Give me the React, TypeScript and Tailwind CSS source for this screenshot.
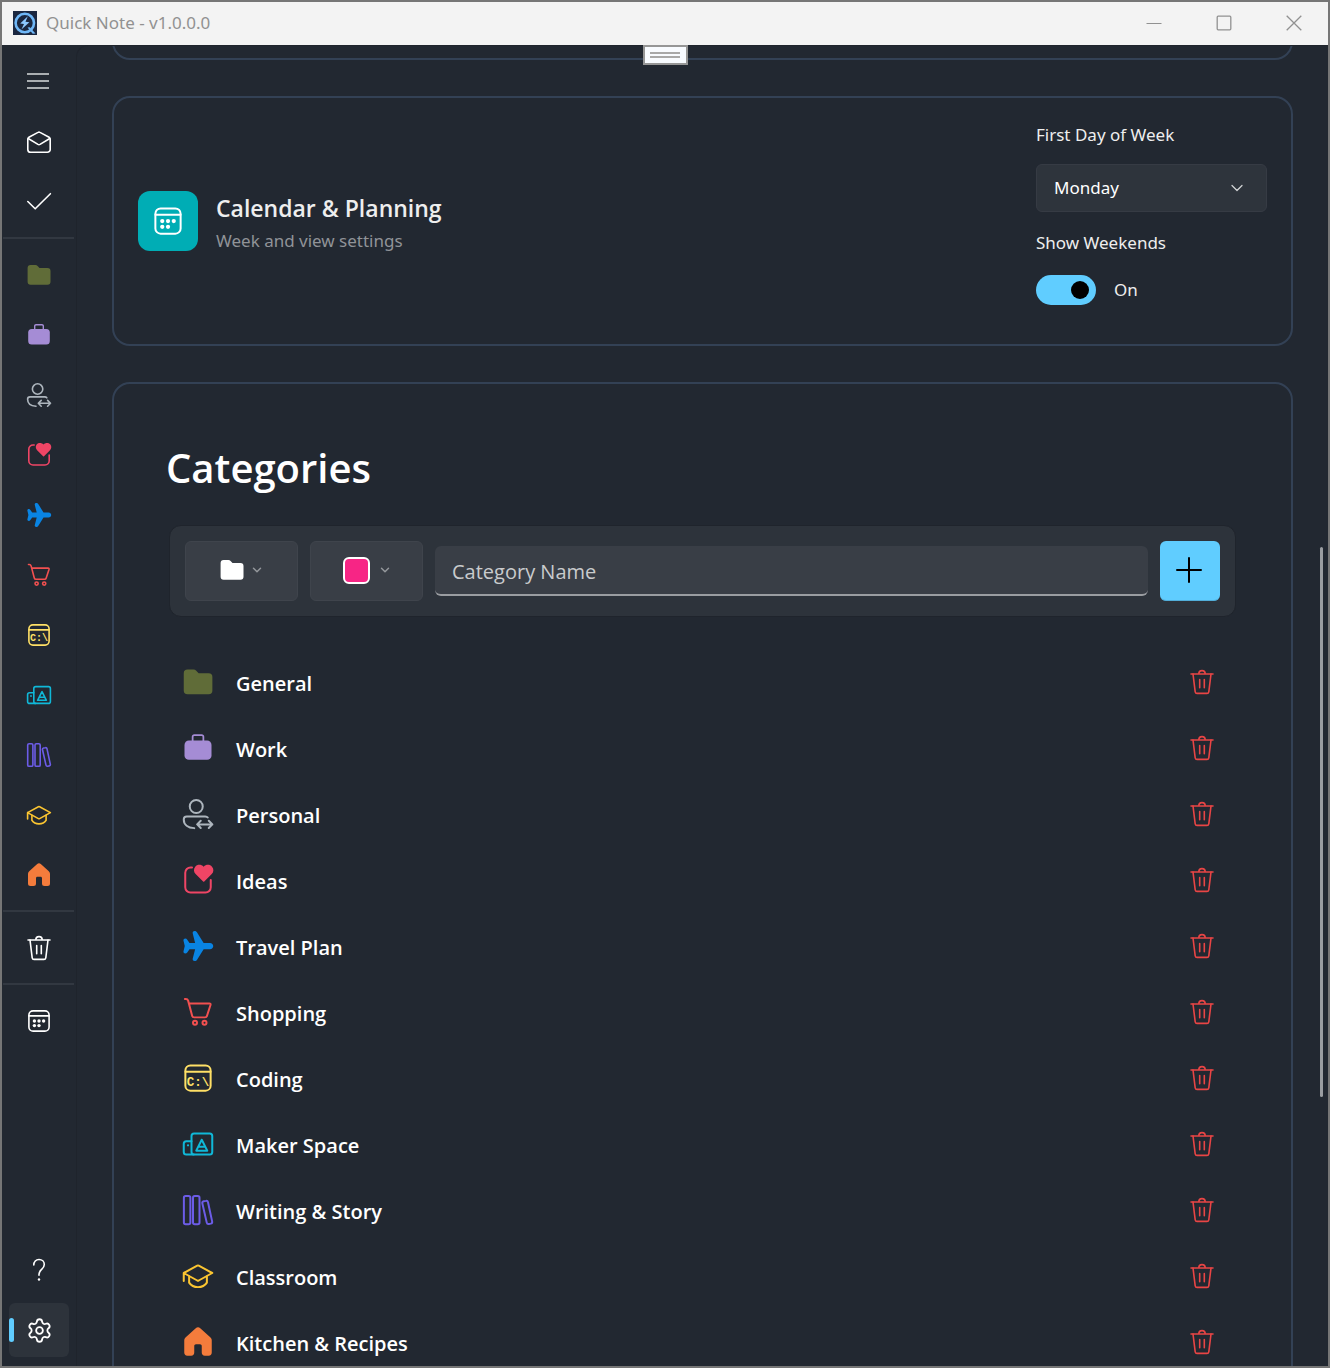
import { useState, type ReactNode } from "react";
import { ChevronDown, Settings } from "lucide-react";

type IconProps = { className?: string };

function Svg({ className = "size-6", children }: { className?: string; children: ReactNode }) {
  return (
    <svg
      viewBox="0 0 24 24"
      className={`shrink-0 overflow-visible ${className}`}
      fill="none"
      stroke="currentColor"
      strokeWidth="1.6"
      strokeLinecap="round"
      strokeLinejoin="round"
      aria-hidden="true"
    >
      {children}
    </svg>
  );
}

function FolderIcon({ className }: IconProps) {
  return (
    <Svg className={className}>
      <path
        fill="currentColor"
        stroke="none"
        d="M.6 5a3 3 0 0 1 3-3h4.800c.9 0 1.600.3 2.200.9L12.500 4.900h8a3 3 0 0 1 3 3v10.800a3 3 0 0 1-3 3H3.600a3 3 0 0 1-3-3z"
      />
    </Svg>
  );
}

function BriefcaseIcon({ className }: IconProps) {
  return (
    <Svg className={className}>
      <rect x="1.200" y="6" width="21.600" height="15.400" rx="3.500" fill="currentColor" stroke="none" />
      <path strokeWidth="1.400" d="M7.700 6.500V3a1.300 1.300 0 0 1 1.300-1.300h6A1.300 1.300 0 0 1 16.300 3v3.500" />
    </Svg>
  );
}

function PersonIcon({ className }: IconProps) {
  return (
    <Svg className={className}>
      <circle cx="10.600" cy="6" r="5.200" />
      <path d="M19.800 14.800c-.5-.7-1-.9-2-.9H3a2.400 2.400 0 0 0-2.400 2.400c0 4.300 3.500 6.700 8.400 7" />
      <path d="M11.500 20.300h12M14.200 17.400l-2.900 2.900 2.900 2.900M20.600 17.400l2.900 2.900-2.900 2.900" />
    </Svg>
  );
}

function IdeasIcon({ className }: IconProps) {
  return (
    <Svg className={className}>
      <path d="M7.200 2H6A4.200 4.200 0 0 0 1.800 6.200v11.600A4.200 4.200 0 0 0 6 22h12a4.200 4.200 0 0 0 4.200-4.200V12" />
      <path
        fill="currentColor"
        stroke="none"
        d="M16.500 1.400C14.600-.6 11.400-.6 9.800 1.300c-1.500 1.800-1.300 4.200.3 5.900l6 6c.3.300.6.3.9 0l6-6c1.600-1.700 1.800-4.100.2-5.900-1.700-1.900-4.800-1.900-6.700.1z"
      />
    </Svg>
  );
}

function PlaneIcon({ className }: IconProps) {
  return (
    <Svg className={className}>
      <path
        fill="currentColor"
        stroke="none"
        d="M21.600 9.500h-5.100L11.400 1.300C10.900.5 10.200 0 9.300 0 8.100 0 7.500.9 7.800 2l1.900 7.500H5.200L3.400 6.900C3 6.300 2.500 6 1.800 6 .8 6 .2 6.800.4 7.800L1.400 12 .4 16.200c-.2 1 .4 1.800 1.400 1.800.7 0 1.200-.3 1.600-.9l1.800-2.600h4.500L7.800 22c-.3 1.100.3 2 1.500 2 .9 0 1.600-.5 2.100-1.300l5.100-8.200h5.100c1.500 0 2.600-1.100 2.600-2.500s-1.100-2.500-2.600-2.500z"
      />
    </Svg>
  );
}

function CartIcon({ className }: IconProps) {
  return (
    <Svg className={className}>
      <path d="M1.500 1.500h.8c1 0 1.500.5 1.800 1.400L7.300 15c.2.800.8 1.300 1.600 1.300h8.700c.8 0 1.400-.5 1.600-1.300l2.800-8.600c.2-.7-.1-1.300-.9-1.300H4.700" />
      <circle cx="9.600" cy="20.600" r="1.600" />
      <circle cx="17.200" cy="20.600" r="1.600" />
    </Svg>
  );
}

function CodingIcon({ className }: IconProps) {
  return (
    <Svg className={className}>
      <rect x="1.900" y="1.900" width="20.200" height="20.200" rx="4" />
      <path d="M2 6.900h20" />
      <text
        x="12"
        y="18"
        textAnchor="middle"
        fontFamily="Liberation Mono, monospace"
        fontSize="10"
        fontWeight="700"
        fill="currentColor"
        stroke="none"
      >
        {"C:\\"}
      </text>
    </Svg>
  );
}

function MakerIcon({ className }: IconProps) {
  return (
    <Svg className={className}>
      <rect x="6.800" y="3.600" width="16.600" height="16.800" rx="2" />
      <path d="M6.800 9.700H2.600a2 2 0 0 0-2 2v6.700a2 2 0 0 0 2 2h6" />
      <path d="M15 8.600l-4.400 8.700h8.800zM12.600 14.200h4.800" />
      <circle cx="4" cy="13" r=".9" fill="currentColor" stroke="none" />
    </Svg>
  );
}

function BooksIcon({ className }: IconProps) {
  return (
    <Svg className={className}>
      <rect x=".7" y=".7" width="5.200" height="22.600" rx="1.400" />
      <rect x="8" y=".7" width="5.200" height="22.600" rx="1.400" />
      <path d="M16.600 5l1.700-.3c.9-.2 1.500.3 1.700 1.100l3.300 15.300c.2.900-.3 1.600-1.100 1.800l-1.500.3c-.9.200-1.500-.3-1.700-1.100L15.500 6.800c-.2-.9.200-1.600 1.100-1.800z" />
    </Svg>
  );
}

function GraduationIcon({ className }: IconProps) {
  return (
    <Svg className={className}>
      <path d="M12.600 3.700l10.800 5.900-10.800 6c-.4.200-.8.200-1.200 0L.6 9.600l10.800-5.900c.4-.2.800-.2 1.200 0zM.6 9.600V16" />
      <path d="M4.900 12.400v4.900c1.500 2.300 4 3.600 7.100 3.600s5.600-1.300 7.100-3.600v-4.900" />
    </Svg>
  );
}

function HomeIcon({ className }: IconProps) {
  return (
    <Svg className={className}>
      <path
        fill="currentColor"
        stroke="none"
        d="M10.200.9c1-1 2.600-1 3.600 0l8 7.300c.8.7 1.200 1.500 1.200 2.600v9.600a2.500 2.500 0 0 1-2.500 2.500h-3a2.500 2.500 0 0 1-2.500-2.500v-5.200c0-.8-.6-1.400-1.400-1.400h-3.200c-.8 0-1.400.6-1.400 1.400v5.200a2.500 2.500 0 0 1-2.500 2.500h-3A2.500 2.500 0 0 1 1 20.400v-9.600c0-1.100.4-1.900 1.200-2.600z"
      />
    </Svg>
  );
}

function TrashIcon({ className }: IconProps) {
  return (
    <Svg className={className}>
      <path d="M1 4h22M8.800 4C8.800 2 10.200.6 12 .6S15.200 2 15.200 4" />
      <path d="M3 4l2.200 17.800c.2 1 .8 1.600 1.800 1.600h10c1 0 1.600-.6 1.800-1.600L21 4M9.700 9.500v8.300M14.300 9.500v8.300" />
    </Svg>
  );
}

function CalendarIcon({ className }: IconProps) {
  return (
    <Svg className={className}>
      <rect x="1.900" y="1.900" width="20.200" height="20.200" rx="4.200" />
      <path d="M2 6.900h20" />
      <g fill="currentColor" stroke="none">
        <circle cx="7.400" cy="12" r="1.700" />
        <circle cx="12" cy="12" r="1.700" />
        <circle cx="16.600" cy="12" r="1.700" />
        <circle cx="7.400" cy="16.600" r="1.700" />
        <circle cx="12" cy="16.600" r="1.700" />
      </g>
    </Svg>
  );
}

function MenuIcon() {
  return (
    <Svg>
      <path strokeLinecap="butt" d="M0 5h22M0 12h22M0 19h22" />
    </Svg>
  );
}

function MailIcon() {
  return (
    <Svg>
      <path d="M.8 9.200c0-.9.300-1.500 1.100-2L11 2.400c.7-.4 1.300-.4 2 0l9.100 4.800c.8.500 1.100 1.100 1.100 2v10.200a2.800 2.800 0 0 1-2.800 2.800H3.600a2.800 2.800 0 0 1-2.800-2.800z" />
      <path d="M1.200 8.500l9.800 5.900c.7.400 1.300.4 2 0l9.800-5.900" />
    </Svg>
  );
}

function CheckIcon() {
  return (
    <Svg>
      <path d="M.8 11.500l7.400 7.300L23.400 3.700" />
    </Svg>
  );
}

function HelpIcon() {
  return (
    <Svg>
      <path d="M6.800 7c0-3.300 2.200-5.500 5.200-5.500s5.300 2.100 5.300 5c0 4.800-5.300 5-5.300 9.800v.9" />
      <circle cx="12" cy="21.500" r="1.200" fill="currentColor" stroke="none" />
    </Svg>
  );
}

function AppLogo() {
  return (
    <svg viewBox="0 0 24 24" className="size-6 shrink-0" aria-hidden="true">
      <rect width="24" height="24" fill="#1b2740" />
      <circle cx="11.800" cy="12" r="9.200" fill="none" stroke="#6fb7f7" strokeWidth="2.600" />
      <path d="M14.500 16.500l2.300-.3 5.700 6.300-2.800.2z" fill="#6fb7f7" />
      <path d="M14.800 5.200L7.200 12.600l3.800.4-2.600 5.600 8-7.400-3.900-.5z" fill="#8cc8ff" />
    </svg>
  );
}

const categories = [
  { name: "General", color: "text-[#606c38]", Icon: FolderIcon },
  { name: "Work", color: "text-[#a58cd5]", Icon: BriefcaseIcon },
  { name: "Personal", color: "text-[#adb5bd]", Icon: PersonIcon },
  { name: "Ideas", color: "text-[#ef4565]", Icon: IdeasIcon },
  { name: "Travel Plan", color: "text-[#0984e3]", Icon: PlaneIcon },
  { name: "Shopping", color: "text-[#f25050]", Icon: CartIcon },
  { name: "Coding", color: "text-[#ffe066]", Icon: CodingIcon },
  { name: "Maker Space", color: "text-[#10b8d8]", Icon: MakerIcon },
  { name: "Writing & Story", color: "text-[#6c5ce7]", Icon: BooksIcon },
  { name: "Classroom", color: "text-[#fbc531]", Icon: GraduationIcon },
  { name: "Kitchen & Recipes", color: "text-[#f47c3c]", Icon: HomeIcon },
];

function NavButton({ label, className = "", children }: { label: string; className?: string; children: ReactNode }) {
  return (
    <button type="button" aria-label={label} className={`flex h-15 w-full shrink-0 items-center justify-center ${className}`}>
      {children}
    </button>
  );
}

function NavDivider() {
  return <div className="mt-[5px] mr-[2px] mb-1.5 ml-px h-[2px] shrink-0 bg-[#323841]" />;
}

function Sidebar() {
  return (
    <nav className="flex w-[74px] shrink-0 flex-col overflow-hidden pt-1.5 pb-1.5 text-white">
      <NavButton label="Menu" className="mb-px text-[#d8dadc]">
        <MenuIcon />
      </NavButton>
      <NavButton label="Inbox">
        <MailIcon />
      </NavButton>
      <NavButton label="Tasks">
        <CheckIcon />
      </NavButton>
      <NavDivider />
      {categories.map(({ name, color, Icon }) => (
        <NavButton key={name} label={name} className={color}>
          <Icon />
        </NavButton>
      ))}
      <NavDivider />
      <NavButton label="Trash">
        <TrashIcon />
      </NavButton>
      <NavDivider />
      <NavButton label="Calendar">
        <CalendarIcon />
      </NavButton>
      <div className="flex-1" />
      <NavButton label="Help">
        <HelpIcon />
      </NavButton>
      <div className="flex h-15 shrink-0 items-center px-[7px]">
        <button
          type="button"
          aria-label="Settings"
          aria-current="page"
          className="relative flex h-[54px] w-full items-center justify-center rounded-md bg-[#2d333b]"
        >
          <span className="absolute left-0 h-6 w-[5px] rounded-full bg-[#60cdff]" />
          <Settings size={27} strokeWidth={1.6} />
        </button>
      </div>
    </nav>
  );
}

function TitleBar() {
  return (
    <header className="flex h-[43px] shrink-0 items-center bg-[#f3f3f3] pb-[2px] pl-[11px] text-[#919191]">
      <AppLogo />
      <h1 className="ml-[9px] flex-1 text-[17px]">Quick Note - v1.0.0.0</h1>
      <button type="button" aria-label="Minimize" className="flex h-full w-[68px] items-center justify-center">
        <svg viewBox="0 0 16 16" className="size-4" stroke="currentColor" aria-hidden="true">
          <path d="M.5 8.500h15" />
        </svg>
      </button>
      <button type="button" aria-label="Maximize" className="flex h-full w-[72px] items-center justify-center">
        <svg viewBox="0 0 16 16" className="size-4" fill="none" stroke="currentColor" strokeWidth="1.300" aria-hidden="true">
          <rect x="1.200" y="1.200" width="13.600" height="13.600" rx="1" />
        </svg>
      </button>
      <button type="button" aria-label="Close" className="flex h-full w-[68px] items-center justify-center">
        <svg viewBox="0 0 16 16" className="size-4" stroke="currentColor" strokeWidth="1.300" aria-hidden="true">
          <path d="M.7.7l14.600 14.600M15.300.7L.7 15.300" />
        </svg>
      </button>
    </header>
  );
}

function CalendarCard() {
  const [weekends, setWeekends] = useState(true);

  return (
    <section className="flex shrink-0 items-center justify-between rounded-[18px] border-2 border-[#334155] p-6">
      <div className="flex items-center gap-[18px]">
        <div className="flex size-15 items-center justify-center rounded-xl bg-[#00adb5] text-white">
          <CalendarIcon className="size-[30px]" />
        </div>
        <div className="pt-[3px]">
          <h2 className="font-['Open_Sans',sans-serif] text-[23px] leading-9 font-semibold">Calendar &amp; Planning</h2>
          <p className="text-[17px] leading-[30px] text-[#909398]">Week and view settings</p>
        </div>
      </div>

      <div className="flex w-[231px] flex-col text-[17px]">
        <label htmlFor="first-day" className="leading-[26px]">
          First Day of Week
        </label>
        <div className="relative mt-4">
          <select
            id="first-day"
            defaultValue="Monday"
            className="h-12 w-full appearance-none rounded-md border border-[#363b44] bg-[#2e343c] pl-[17px] text-white"
          >
            <option>Monday</option>
            <option>Saturday</option>
            <option>Sunday</option>
          </select>
          <ChevronDown size={20} strokeWidth={1.5} className="pointer-events-none absolute top-3.5 right-5 text-[#d0d2d4]" />
        </div>
        <label htmlFor="weekends" className="mt-[18px] leading-[26px]">
          Show Weekends
        </label>
        <div className="mt-1 flex h-15 items-center gap-[18px]">
          <input
            id="weekends"
            type="checkbox"
            role="switch"
            checked={weekends}
            onChange={(e) => setWeekends(e.target.checked)}
            className="flex h-[30px] w-15 appearance-none items-center rounded-full bg-[#4a5059] px-[7px] before:size-[18px] before:rounded-full before:bg-black checked:justify-end checked:bg-[#60cdff]"
          />
          <span>{weekends ? "On" : "Off"}</span>
        </div>
      </div>
    </section>
  );
}

function CategoriesCard() {
  return (
    <section className="flex shrink-0 flex-col rounded-[18px] border-2 border-[#334155] px-[51px] pt-[54px] pb-12 font-['Open_Sans',sans-serif]">
      <h2 className="pl-px text-[40px] leading-[60px] font-semibold text-white">Categories</h2>

      <form
        className="mx-1 mt-[27px] flex items-center gap-3 rounded-xl border border-[#1f242c] bg-[#2d333b] p-[15px]"
        onSubmit={(e) => e.preventDefault()}
      >
        <button
          type="button"
          aria-label="Choose icon"
          className="flex h-15 w-[113px] shrink-0 items-center justify-center gap-1.5 rounded-md border border-[#3f444c] bg-[#393e46] pb-[2px] pl-px text-white"
        >
          <FolderIcon />
          <ChevronDown size={14} strokeWidth={2.5} className="text-[#94979c]" />
        </button>
        <button
          type="button"
          aria-label="Choose color"
          className="flex h-15 w-[113px] shrink-0 items-center justify-center gap-2 rounded-md border border-[#3f444c] bg-[#393e46] pb-[2px] pl-px"
        >
          <span className="size-[27px] rounded-md border-2 border-white bg-[#f72585]" />
          <ChevronDown size={14} strokeWidth={2.5} className="text-[#94979c]" />
        </button>
        <input
          type="text"
          aria-label="Category Name"
          placeholder="Category Name"
          className="h-[50px] min-w-0 flex-1 rounded-md border-b-2 border-[#9a9da1] bg-[#393e46] px-[17px] pt-0.5 text-[20px] text-white placeholder:text-[#c9cbcd]"
        />
        <button
          type="submit"
          aria-label="Add category"
          className="flex size-15 shrink-0 items-center justify-center rounded-md border-b border-[#52aed9] bg-[#60cdff] pr-[2px] pb-px text-black"
        >
          <Svg>
            <path strokeWidth="2" d="M0 12h24M12 0v24" />
          </Svg>
        </button>
      </form>

      <ul className="mt-8">
        {categories.map(({ name, color, Icon }) => (
          <li key={name} className="flex h-[66px] items-center pr-2 pl-[18px]">
            <span className={color}>
              <Icon className="size-[30px]" />
            </span>
            <span className="ml-[23px] flex-1 pt-[3px] text-[20px] font-semibold text-white">{name}</span>
            <button type="button" aria-label={`Delete ${name}`} className="flex size-15 items-center justify-center text-[#e84545]">
              <TrashIcon />
            </button>
          </li>
        ))}
      </ul>
    </section>
  );
}

export default function App() {
  return (
    <div className="flex h-screen flex-col overflow-hidden border-2 border-[#767676] bg-[#222831] font-['Noto_Sans','Open_Sans',sans-serif] text-[#eeeeee]">
      <TitleBar />
      <div className="relative flex min-h-0 flex-1">
        <Sidebar />
        <main className="flex min-w-0 flex-1 flex-col gap-9 overflow-hidden rounded-tl-xl border-t border-l border-[#1f242c] pr-[35px] pl-[35px]">
          {/* tail of the card scrolled out above */}
          <section className="-mt-10 h-[54px] shrink-0 rounded-[18px] border-2 border-[#334155]" />
          <CalendarCard />
          <CategoriesCard />
        </main>

        {/* scrollbar thumb */}
        <div className="absolute top-[38%] right-[5px] h-5/12 w-[3px] rounded-full bg-[#9a9da1]" />

        {/* drag handle over the content */}
        <div className="absolute inset-x-0 top-0 flex justify-center">
          <div className="flex h-5 w-[45px] flex-col items-center justify-center gap-[2px] border-2 border-[#969696] bg-[#f8fbff]">
            <span className="h-[2px] w-[30px] bg-[#a8a8a8]" />
            <span className="h-[2px] w-[30px] bg-[#a8a8a8]" />
          </div>
        </div>
      </div>
    </div>
  );
}
